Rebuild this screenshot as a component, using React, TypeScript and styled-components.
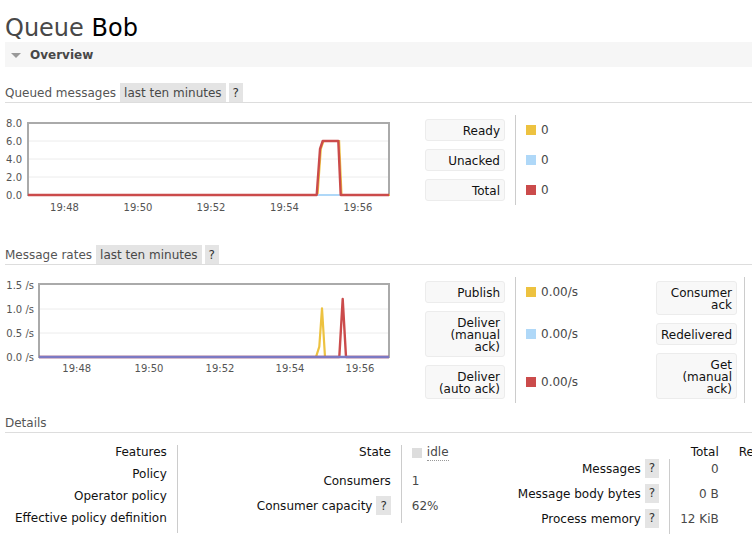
import React from "react";
import styled, { createGlobalStyle } from "styled-components";

const GlobalStyle = createGlobalStyle`
  html, body { margin: 0; padding: 0; background: #fff; }
  body {
    font-family: "DejaVu Sans", Verdana, sans-serif;
    font-size: 12px;
    color: #484848;
  }
  #root { width: 752px; height: 553px; overflow: hidden; }
`;

const Page = styled.div`
  width: 752px;
  box-sizing: border-box;
  padding-left: 5px;
  overflow: hidden;
`;

const Title = styled.h1`
  margin: 14px 0 0;
  font-size: 24px;
  line-height: 28px;
  font-weight: normal;
  color: #484848;
  white-space: nowrap;
`;

const TitleName = styled.span`
  color: #000;
`;

const SectionBar = styled.div`
  height: 25px;
  background: #f6f6f6;
  display: flex;
  align-items: center;
  font-weight: bold;
  color: #484848;
`;

const Triangle = styled.span`
  margin: 1px 9px 0 6px;
  width: 0;
  height: 0;
  border-left: 5px solid transparent;
  border-right: 5px solid transparent;
  border-top: 5px solid #999;
`;

const SubHeading = styled.div<{ $mt: number }>`
  margin-top: ${(p) => p.$mt}px;
  display: flex;
  height: 19px;
  line-height: 21px;
  border-bottom: 1px solid #ddd;
  color: #555;
  white-space: nowrap;
`;

const Tag = styled.span`
  margin-left: 4px;
  padding: 0 4px;
  background: #e4e4e4;
  color: #484848;
`;

const Help = styled.span<{ $ml?: number; $lh?: number }>`
  margin-left: ${(p) => p.$ml ?? 3}px;
  padding: 0 4px;
  height: 19px;
  line-height: ${(p) => p.$lh ?? 20}px;
  background: #e4e4e4;
  color: #333;
  flex-shrink: 0;
`;

const ChartRow = styled.div`
  margin-top: 12px;
  display: flex;
  align-items: flex-start;
`;

const ChartSvg = styled.svg`
  flex-shrink: 0;
  display: block;
  font-family: "DejaVu Sans", Verdana, sans-serif;
  font-size: 10px;
`;

const Legend = styled.div`
  margin-left: 25px;
  display: flex;
  flex-shrink: 0;
`;

const LegendTable = styled.div<{ $label: number; $pad: number }>`
  display: grid;
  grid-template-columns: ${(p) => p.$label + p.$pad}px 141px;
  flex-shrink: 0;
`;

const LegendLabelCell = styled.div<{ $pad: number }>`
  padding: 4px ${(p) => p.$pad}px 4px 0;
`;

const LegendLabel = styled.div`
  box-sizing: border-box;
  width: 100%;
  padding: 5px 4px 3px;
  border: 1px solid #ececec;
  border-radius: 3px;
  background: #f8f8f8;
  line-height: 12px;
  text-align: right;
  color: #111;
`;

const LegendValue = styled.div`
  border-left: 1px solid #ccc;
  padding-left: 10px;
  display: flex;
  align-items: center;
  gap: 5px;
  white-space: nowrap;
  color: #484848;
`;

const Swatch = styled.span<{ $color: string }>`
  display: inline-block;
  width: 10px;
  height: 10px;
  background: ${(p) => p.$color};
  flex-shrink: 0;
`;

const Details = styled.div`
  margin-top: 12px;
  display: flex;
  align-items: flex-start;
`;

const FactsTable = styled.div<{ $cols: string }>`
  display: grid;
  grid-template-columns: ${(p) => p.$cols};
  flex-shrink: 0;
`;

const FactLabel = styled.div<{ $top?: boolean; $pb?: number }>`
  display: flex;
  justify-content: flex-end;
  align-items: ${(p) => (p.$top ? "flex-start" : "center")};
  gap: 4px;
  padding: 0 10px ${(p) => p.$pb ?? 8}px;
  line-height: 14px;
  color: #111;
  white-space: nowrap;
`;

const FactValue = styled.div<{
  $top?: boolean;
  $pb?: number;
  $right?: boolean;
  $divider?: boolean;
  $minH?: number;
}>`
  display: flex;
  justify-content: ${(p) => (p.$right ? "flex-end" : "flex-start")};
  align-items: ${(p) => (p.$top ? "flex-start" : "center")};
  gap: 5px;
  min-height: ${(p) => p.$minH ?? 14}px;
  padding: 0 10px ${(p) => p.$pb ?? 8}px;
  line-height: 14px;
  border-left: ${(p) => (p.$divider === false ? "none" : "1px solid #ccc")};
  color: #484848;
  white-space: nowrap;
`;

const ColHead = styled.div`
  padding: 0 10px;
  line-height: 14px;
  text-align: right;
  color: #111;
  white-space: nowrap;
`;

const StateSwatch = styled.span`
  display: inline-block;
  width: 10px;
  height: 10px;
  margin-top: 3px;
  background: #ddd;
`;

const StateText = styled.span`
  line-height: 14px;
  padding-bottom: 1px;
  border-bottom: 1px dotted #999;
`;

type Pt = [number, number];
const pts = (a: Pt[]) => a.map((p) => p.join(",")).join(" ");

const AXIS = "#545454";

function QueuedChart() {
  const ys: [string, number][] = [
    ["8.0", 8],
    ["6.0", 26],
    ["4.0", 44],
    ["2.0", 62],
    ["0.0", 80],
  ];
  const xs: [string, number][] = [
    ["19:48", 59.5],
    ["19:50", 133],
    ["19:52", 206],
    ["19:54", 279.5],
    ["19:56", 353],
  ];
  const spike: Pt[] = [
    [23, 80],
    [311.7, 80],
    [315, 34],
    [317.7, 26],
    [333.3, 26],
    [335.7, 80],
    [384, 80],
  ];
  return (
    <ChartSvg width={395} height={100}>
      {[26, 44, 62].map((y) => (
        <line key={y} x1={23} x2={384} y1={y} y2={y} stroke="#ececec" strokeWidth={1} />
      ))}
      <rect x={23} y={8} width={361} height={72} fill="none" stroke="#aaa" strokeWidth={2} />
      <polyline points={pts(spike)} fill="none" stroke="#edc240" strokeWidth={2.2} transform="translate(0.8,0)" />
      <polyline points={pts([[23, 80], [384, 80]])} fill="none" stroke="#afd8f8" strokeWidth={2.2} />
      <polyline points={pts(spike)} fill="none" stroke="#cb4b4b" strokeWidth={2.4} strokeLinejoin="round" />
      {ys.map(([t, y]) => (
        <text key={t} x={17} y={y + 3.6} textAnchor="end" fill={AXIS}>
          {t}
        </text>
      ))}
      {xs.map(([t, x]) => (
        <text key={t} x={x} y={95.6} textAnchor="middle" fill={AXIS}>
          {t}
        </text>
      ))}
    </ChartSvg>
  );
}

function RatesChart() {
  const ys: [string, number][] = [
    ["1.5 /s", 8.5],
    ["1.0 /s", 32.3],
    ["0.5 /s", 56.3],
    ["0.0 /s", 80.3],
  ];
  const xs: [string, number][] = [
    ["19:48", 71.7],
    ["19:50", 144],
    ["19:52", 215],
    ["19:54", 285],
    ["19:56", 355],
  ];
  return (
    <ChartSvg width={395} height={100}>
      {[32, 56].map((y) => (
        <line key={y} x1={34} x2={384} y1={y} y2={y} stroke="#ececec" strokeWidth={1} />
      ))}
      <rect x={34} y={7} width={350} height={73} fill="none" stroke="#aaa" strokeWidth={2} />
      <polyline
        points={pts([[34, 80], [311, 80], [314.3, 69.7], [317, 31.3], [320, 80], [384, 80]])}
        fill="none"
        stroke="#edc240"
        strokeWidth={2.2}
        strokeLinejoin="round"
      />
      <polyline
        points={pts([[34, 80], [334.3, 80], [337.7, 22], [341, 80], [384, 80]])}
        fill="none"
        stroke="#cb4b4b"
        strokeWidth={2.4}
        strokeLinejoin="round"
      />
      <line x1={34} x2={384} y1={80} y2={80} stroke="#7c79c3" strokeWidth={2.4} />
      {ys.map(([t, y]) => (
        <text key={t} x={29} y={y + 3.6} textAnchor="end" fill={AXIS}>
          {t}
        </text>
      ))}
      {xs.map(([t, x]) => (
        <text key={t} x={x} y={94.6} textAnchor="middle" fill={AXIS}>
          {t}
        </text>
      ))}
    </ChartSvg>
  );
}

type LegendItem = { label: React.ReactNode; color: string; value: string };

function LegendBlock({ items, label, pad }: { items: LegendItem[]; label: number; pad: number }) {
  return (
    <LegendTable $label={label} $pad={pad}>
      {items.map((it, i) => (
        <React.Fragment key={i}>
          <LegendLabelCell $pad={pad}>
            <LegendLabel>{it.label}</LegendLabel>
          </LegendLabelCell>
          <LegendValue>
            <Swatch $color={it.color} />
            {it.value}
          </LegendValue>
        </React.Fragment>
      ))}
    </LegendTable>
  );
}

export default function App() {
  return (
    <>
      <GlobalStyle />
      <Page>
        <Title>
          Queue <TitleName>Bob</TitleName>
        </Title>
        <SectionBar>
          <Triangle />
          Overview
        </SectionBar>

        <SubHeading $mt={16}>
          Queued messages<Tag>last ten minutes</Tag>
          <Help>?</Help>
        </SubHeading>
        <ChartRow>
          <QueuedChart />
          <Legend>
            <LegendBlock
              label={80}
              pad={10}
              items={[
                { label: "Ready", color: "#edc240", value: "0" },
                { label: "Unacked", color: "#afd8f8", value: "0" },
                { label: "Total", color: "#cb4b4b", value: "0" },
              ]}
            />
          </Legend>
        </ChartRow>

        <SubHeading $mt={30}>
          Message rates<Tag>last ten minutes</Tag>
          <Help>?</Help>
        </SubHeading>
        <ChartRow>
          <RatesChart />
          <Legend>
            <LegendBlock
              label={80}
              pad={10}
              items={[
                { label: "Publish", color: "#edc240", value: "0.00/s" },
                { label: "Deliver (manual ack)", color: "#afd8f8", value: "0.00/s" },
                { label: "Deliver (auto ack)", color: "#cb4b4b", value: "0.00/s" },
              ]}
            />
            <LegendBlock
              label={81}
              pad={7}
              items={[
                { label: "Consumer ack", color: "#4da74d", value: "0.00/s" },
                { label: "Redelivered", color: "#9440ed", value: "0.00/s" },
                { label: "Get (manual ack)", color: "#7c79c3", value: "0.00/s" },
              ]}
            />
          </Legend>
        </ChartRow>

        <SubHeading $mt={10}>Details</SubHeading>
        <Details>
          <FactsTable $cols="auto 70px">
            <FactLabel $top>Features</FactLabel>
            <FactValue $top />
            <FactLabel $top>Policy</FactLabel>
            <FactValue $top />
            <FactLabel $top>Operator policy</FactLabel>
            <FactValue $top />
            <FactLabel $top>Effective policy definition</FactLabel>
            <FactValue $top />
          </FactsTable>

          <FactsTable $cols="auto 107px">
            <FactLabel $top>State</FactLabel>
            <FactValue $top $minH={21}>
              <StateSwatch />
              <StateText>idle</StateText>
            </FactValue>
            <FactLabel $top>Consumers</FactLabel>
            <FactValue $top>1</FactValue>
            <FactLabel>
              Consumer capacity<Help $ml={0} $lh={20}>?</Help>
            </FactLabel>
            <FactValue>62%</FactValue>
          </FactsTable>

          <FactsTable $cols="auto auto auto auto">
            <ColHead />
            <ColHead>Total</ColHead>
            <ColHead>Ready</ColHead>
            <ColHead>Unacked</ColHead>

            <FactLabel $pb={6}>
              Messages<Help $ml={0} $lh={19}>?</Help>
            </FactLabel>
            <FactValue $pb={6} $right>0</FactValue>
            <FactValue $pb={6} $right $divider={false}>0</FactValue>
            <FactValue $pb={6} $right $divider={false}>0</FactValue>

            <FactLabel $pb={6}>
              Message body bytes<Help $ml={0} $lh={19}>?</Help>
            </FactLabel>
            <FactValue $pb={6} $right>0 B</FactValue>
            <FactValue $pb={6} $right $divider={false}>0 B</FactValue>
            <FactValue $pb={6} $right $divider={false}>0 B</FactValue>

            <FactLabel $pb={6}>
              Process memory<Help $ml={0} $lh={19}>?</Help>
            </FactLabel>
            <FactValue $pb={6} $right>12 KiB</FactValue>
            <FactValue $pb={6} $right $divider={false} />
            <FactValue $pb={6} $right $divider={false} />
          </FactsTable>
        </Details>
      </Page>
    </>
  );
}
